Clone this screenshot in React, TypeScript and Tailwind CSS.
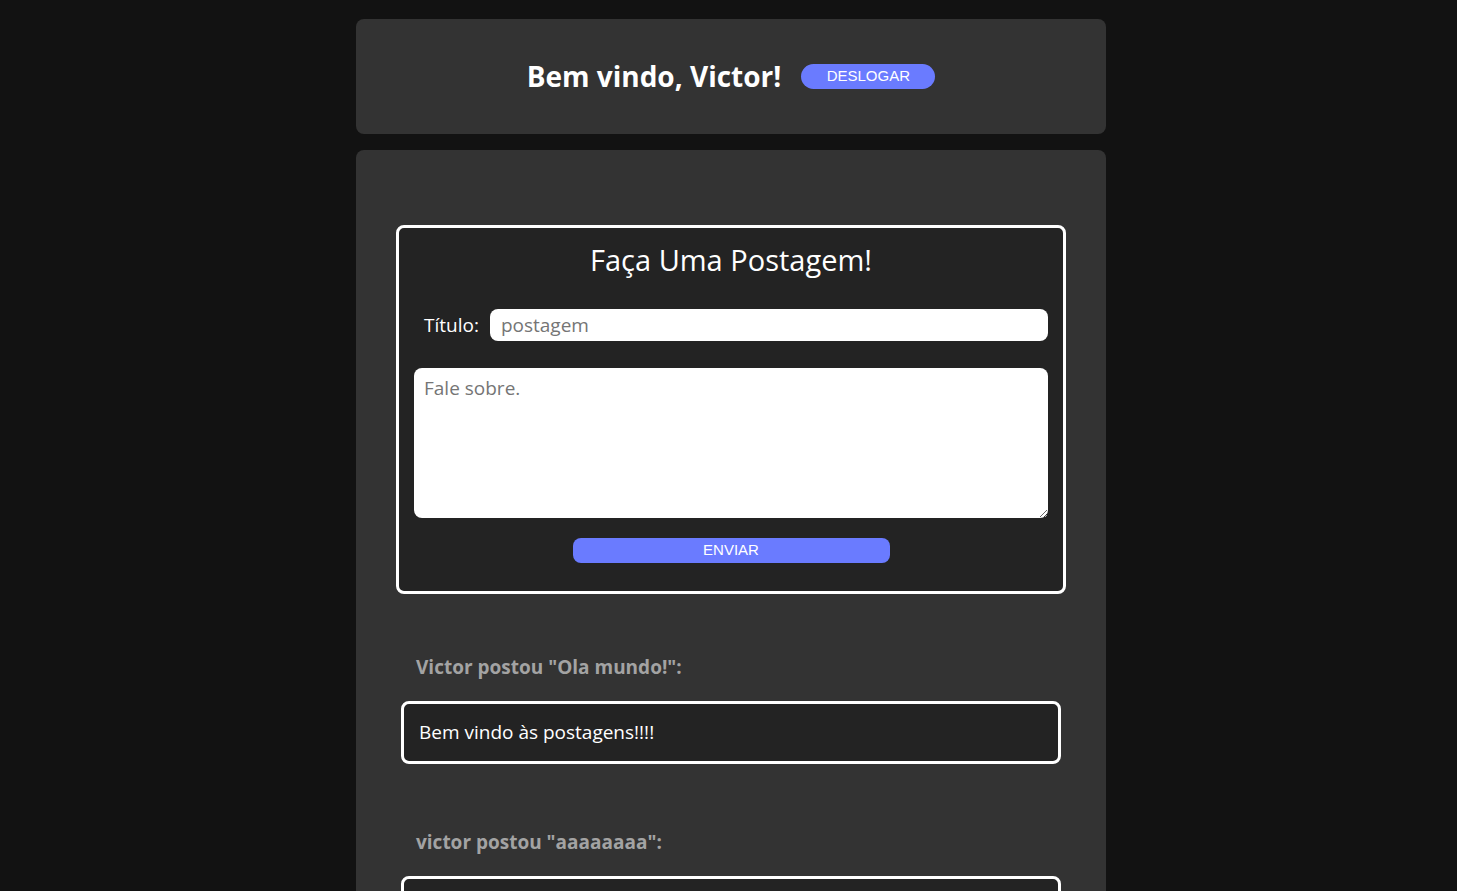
export default function App() {
  const posts = [
    { author: 'Victor', title: 'Ola mundo!', body: 'Bem vindo às postagens!!!!' },
    { author: 'victor', title: 'aaaaaaaa', body: 'aaaaaaaaaaaaaaaa' },
  ];

  return (
    <div className="min-h-screen bg-[#121212] pt-[19px] pl-[5px] font-['Open_Sans','Noto_Sans',sans-serif] text-white">
      <div className="mx-auto flex w-[750px] flex-col gap-4">
        <header className="flex h-[115px] items-center justify-center gap-5 rounded-lg bg-[#333333]">
          <h1 className="-mt-[2px] text-[28px] font-bold leading-9">Bem vindo, Victor!</h1>
          <button className="h-[25px] w-[134px] rounded-full bg-[#6a7bff] font-['Liberation_Sans',sans-serif] text-[15px] text-white">
            DESLOGAR
          </button>
        </header>

        <main className="rounded-lg bg-[#333333] px-10 pt-[75px] pb-10">
          <form className="flex flex-col rounded-lg border-[3px] border-white bg-[#232323] px-[15px] pt-[13px] pb-[28px]">
            <h2 className="text-center text-[29px] leading-[38px]">Faça Uma Postagem!</h2>
            <div className="mt-[30px] flex items-center gap-[11px] pl-[10px]">
              <label className="text-[19px]">Título:</label>
              <input
                className="h-8 flex-1 rounded-lg bg-white px-[11px] text-[19px] text-black outline-none placeholder:text-[#757575]"
                placeholder="postagem"
              />
            </div>
            <textarea
              className="mt-[27px] h-[150px] rounded-lg bg-white px-[10px] py-[6px] text-[19px] text-black outline-none placeholder:text-[#757575]"
              placeholder="Fale sobre."
            />
            <button
              type="button"
              className="mx-auto mt-5 h-[25px] w-[317px] rounded-lg bg-[#6a7bff] font-['Liberation_Sans',sans-serif] text-[15px] text-white"
            >
              ENVIAR
            </button>
          </form>

          <div className="flex flex-col">
            {posts.map((p, i) => (
              <section key={i} className={`px-[5px] ${i === 0 ? 'mt-[59px]' : 'mt-[64px]'}`}>
                <h3 className="pl-[15px] text-[19px] font-bold leading-[28px] text-[#a3a3a3]">
                  {p.author} postou "{p.title}":
                </h3>
                <div className="mt-5 flex h-[63px] items-center rounded-lg border-[3px] border-white bg-[#232323] px-[15px] text-[19px]">
                  {p.body}
                </div>
              </section>
            ))}
          </div>
        </main>
      </div>
    </div>
  );
}
